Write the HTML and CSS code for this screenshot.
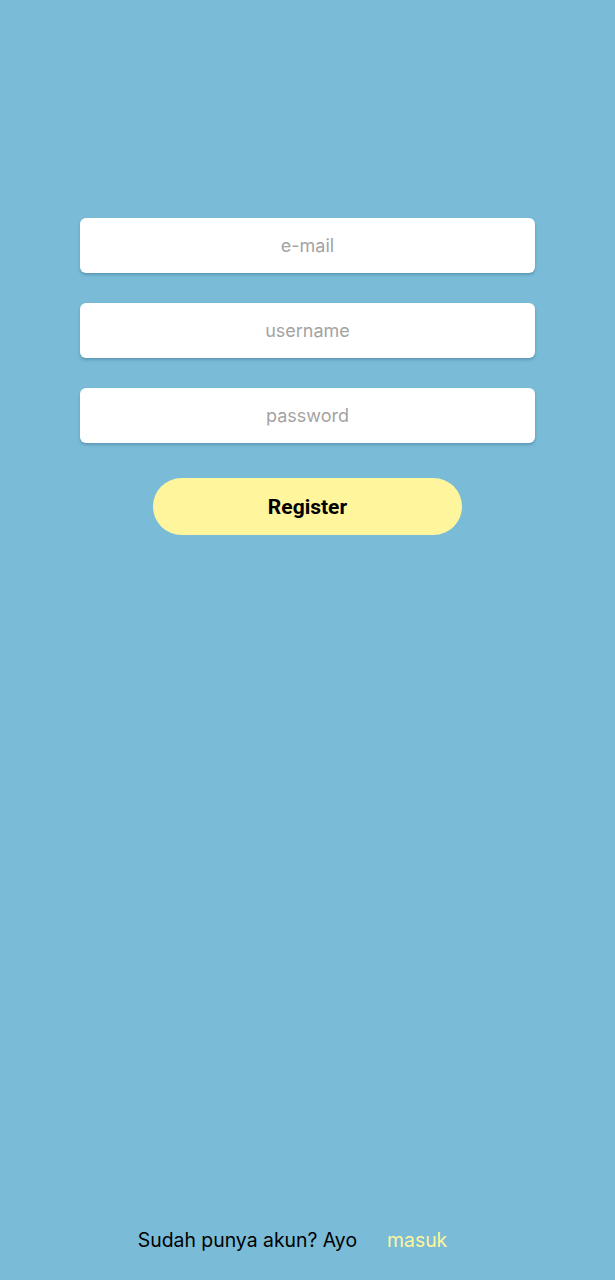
FILE: index.html
```html
<!DOCTYPE html>
<html lang="id">
<head>
<meta charset="utf-8">
<title>Register</title>
<link rel="stylesheet" href="styles.css">
</head>
<body>
<div class="page">
  <form class="form">
    <input class="field" type="email" placeholder="e-mail">
    <input class="field" type="text" placeholder="username">
    <input class="field" type="password" placeholder="password">
    <button class="btn" type="button">Register</button>
  </form>
  <div class="footer">
    <span class="footer-text">Sudah punya akun? Ayo</span>
    <a class="footer-link" href="#">masuk</a>
  </div>
</div>
</body>
</html>
```
FILE: styles.css
```css
html, body {
  margin: 0;
  padding: 0;
  background: #7abbd7;
}
.page {
  height: 1280px;
  display: flex;
  flex-direction: column;
  align-items: center;
  box-sizing: border-box;
  padding-top: 218px;
}
.form {
  display: flex;
  flex-direction: column;
  align-items: center;
  gap: 30px;
  width: 455px;
}
.field {
  width: 455px;
  height: 55px;
  box-sizing: border-box;
  border: none;
  border-radius: 6px;
  background: #ffffff;
  box-shadow: 0 2px 3px rgba(40, 90, 120, 0.35);
  text-align: center;
  font-family: Inter, "Noto Sans", sans-serif;
  font-size: 18px;
  color: #333;
  outline: none;
}
.field::placeholder {
  color: #a3a3a3;
}
.btn {
  margin-top: 5px;
  width: 309px;
  height: 57px;
  border: none;
  border-radius: 29px;
  background: #fff59d;
  font-family: Roboto, "Liberation Sans", sans-serif;
  font-weight: 700;
  font-size: 21px;
  color: #000;
}
.footer {
  margin-top: auto;
  margin-bottom: 28px;
  display: flex;
  gap: 30px;
  font-family: Inter, "Noto Sans", sans-serif;
  font-size: 19.4px;
  padding-right: 30px;
}
.footer-text {
  color: #000;
}
.footer-link {
  color: #fff59d;
  text-decoration: none;
}
```
